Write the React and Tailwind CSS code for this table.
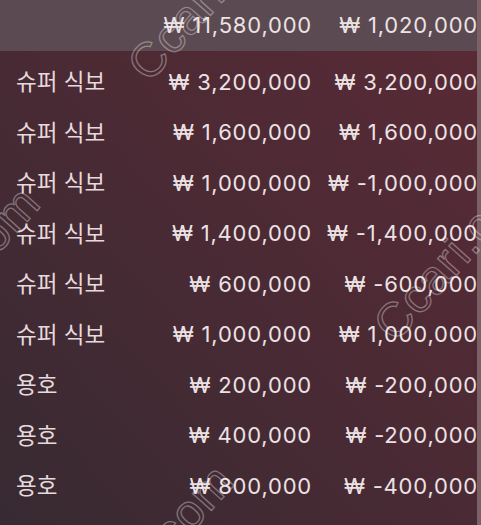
import React from 'react';

const rows = [
  { name: '슈퍼 식보', bet: '₩ 3,200,000', result: '₩ 3,200,000' },
  { name: '슈퍼 식보', bet: '₩ 1,600,000', result: '₩ 1,600,000' },
  { name: '슈퍼 식보', bet: '₩ 1,000,000', result: '₩ -1,000,000' },
  { name: '슈퍼 식보', bet: '₩ 1,400,000', result: '₩ -1,400,000' },
  { name: '슈퍼 식보', bet: '₩ 600,000', result: '₩ -600,000' },
  { name: '슈퍼 식보', bet: '₩ 1,000,000', result: '₩ 1,000,000' },
  { name: '용호', bet: '₩ 200,000', result: '₩ -200,000' },
  { name: '용호', bet: '₩ 400,000', result: '₩ -200,000' },
  { name: '용호', bet: '₩ 800,000', result: '₩ -400,000' },
];

const font = { fontFamily: 'Inter, "Noto Sans CJK KR", sans-serif' };

// 워터마크 위치 (좌하단 기준, 회전)
const marks = [
  { left: 155, top: 41 },
  { left: 401, top: 301 },
  { left: -102, top: 329 },
  { left: 92, top: 607 },
];

function Row({ name, bet, result, header }) {
  return (
    <div className={header ? 'flex items-center h-[51px]' : 'flex items-center h-[50.5px]'}>
      <div className="flex-1 pl-[16px] text-[22.5px] text-[#e6dadd]">{name}</div>
      <div className="w-[170px] text-right text-[22px] text-[#ece2e4] tracking-[0.8px] whitespace-nowrap">{bet}</div>
      <div className="w-[166px] text-right text-[22px] text-[#ece2e4] tracking-[0.8px] whitespace-nowrap">{result}</div>
      <div className="w-[3px]" />
    </div>
  );
}

export default function App() {
  return (
    <div
      className="relative w-[481px] h-[525px] overflow-hidden bg-gradient-to-tr from-[#372a32] via-[#4a2a34] to-[#5a2a36]"
      style={font}
    >
      <div className="bg-[#5b4a51]">
        <Row header name="" bet="₩ 11,580,000" result="₩ 1,020,000" />
      </div>
      <div className="pt-[6px]">
        {rows.map((r, i) => (
          <Row key={i} {...r} />
        ))}
      </div>
      <div className="absolute right-0 top-0 h-full w-[4px] bg-[#7a6168]" />
      {marks.map((m, i) => (
        <span
          key={i}
          aria-hidden="true"
          className="absolute pointer-events-none select-none whitespace-nowrap text-[48px] leading-none tracking-[1px] text-transparent origin-bottom-left rotate-[-48deg] [-webkit-text-stroke:1.3px_rgba(255,255,255,0.35)]"
          style={{ left: m.left, top: m.top, fontFamily: '"Liberation Sans", sans-serif' }}
        >
          Ccari.com
        </span>
      ))}
    </div>
  );
}
